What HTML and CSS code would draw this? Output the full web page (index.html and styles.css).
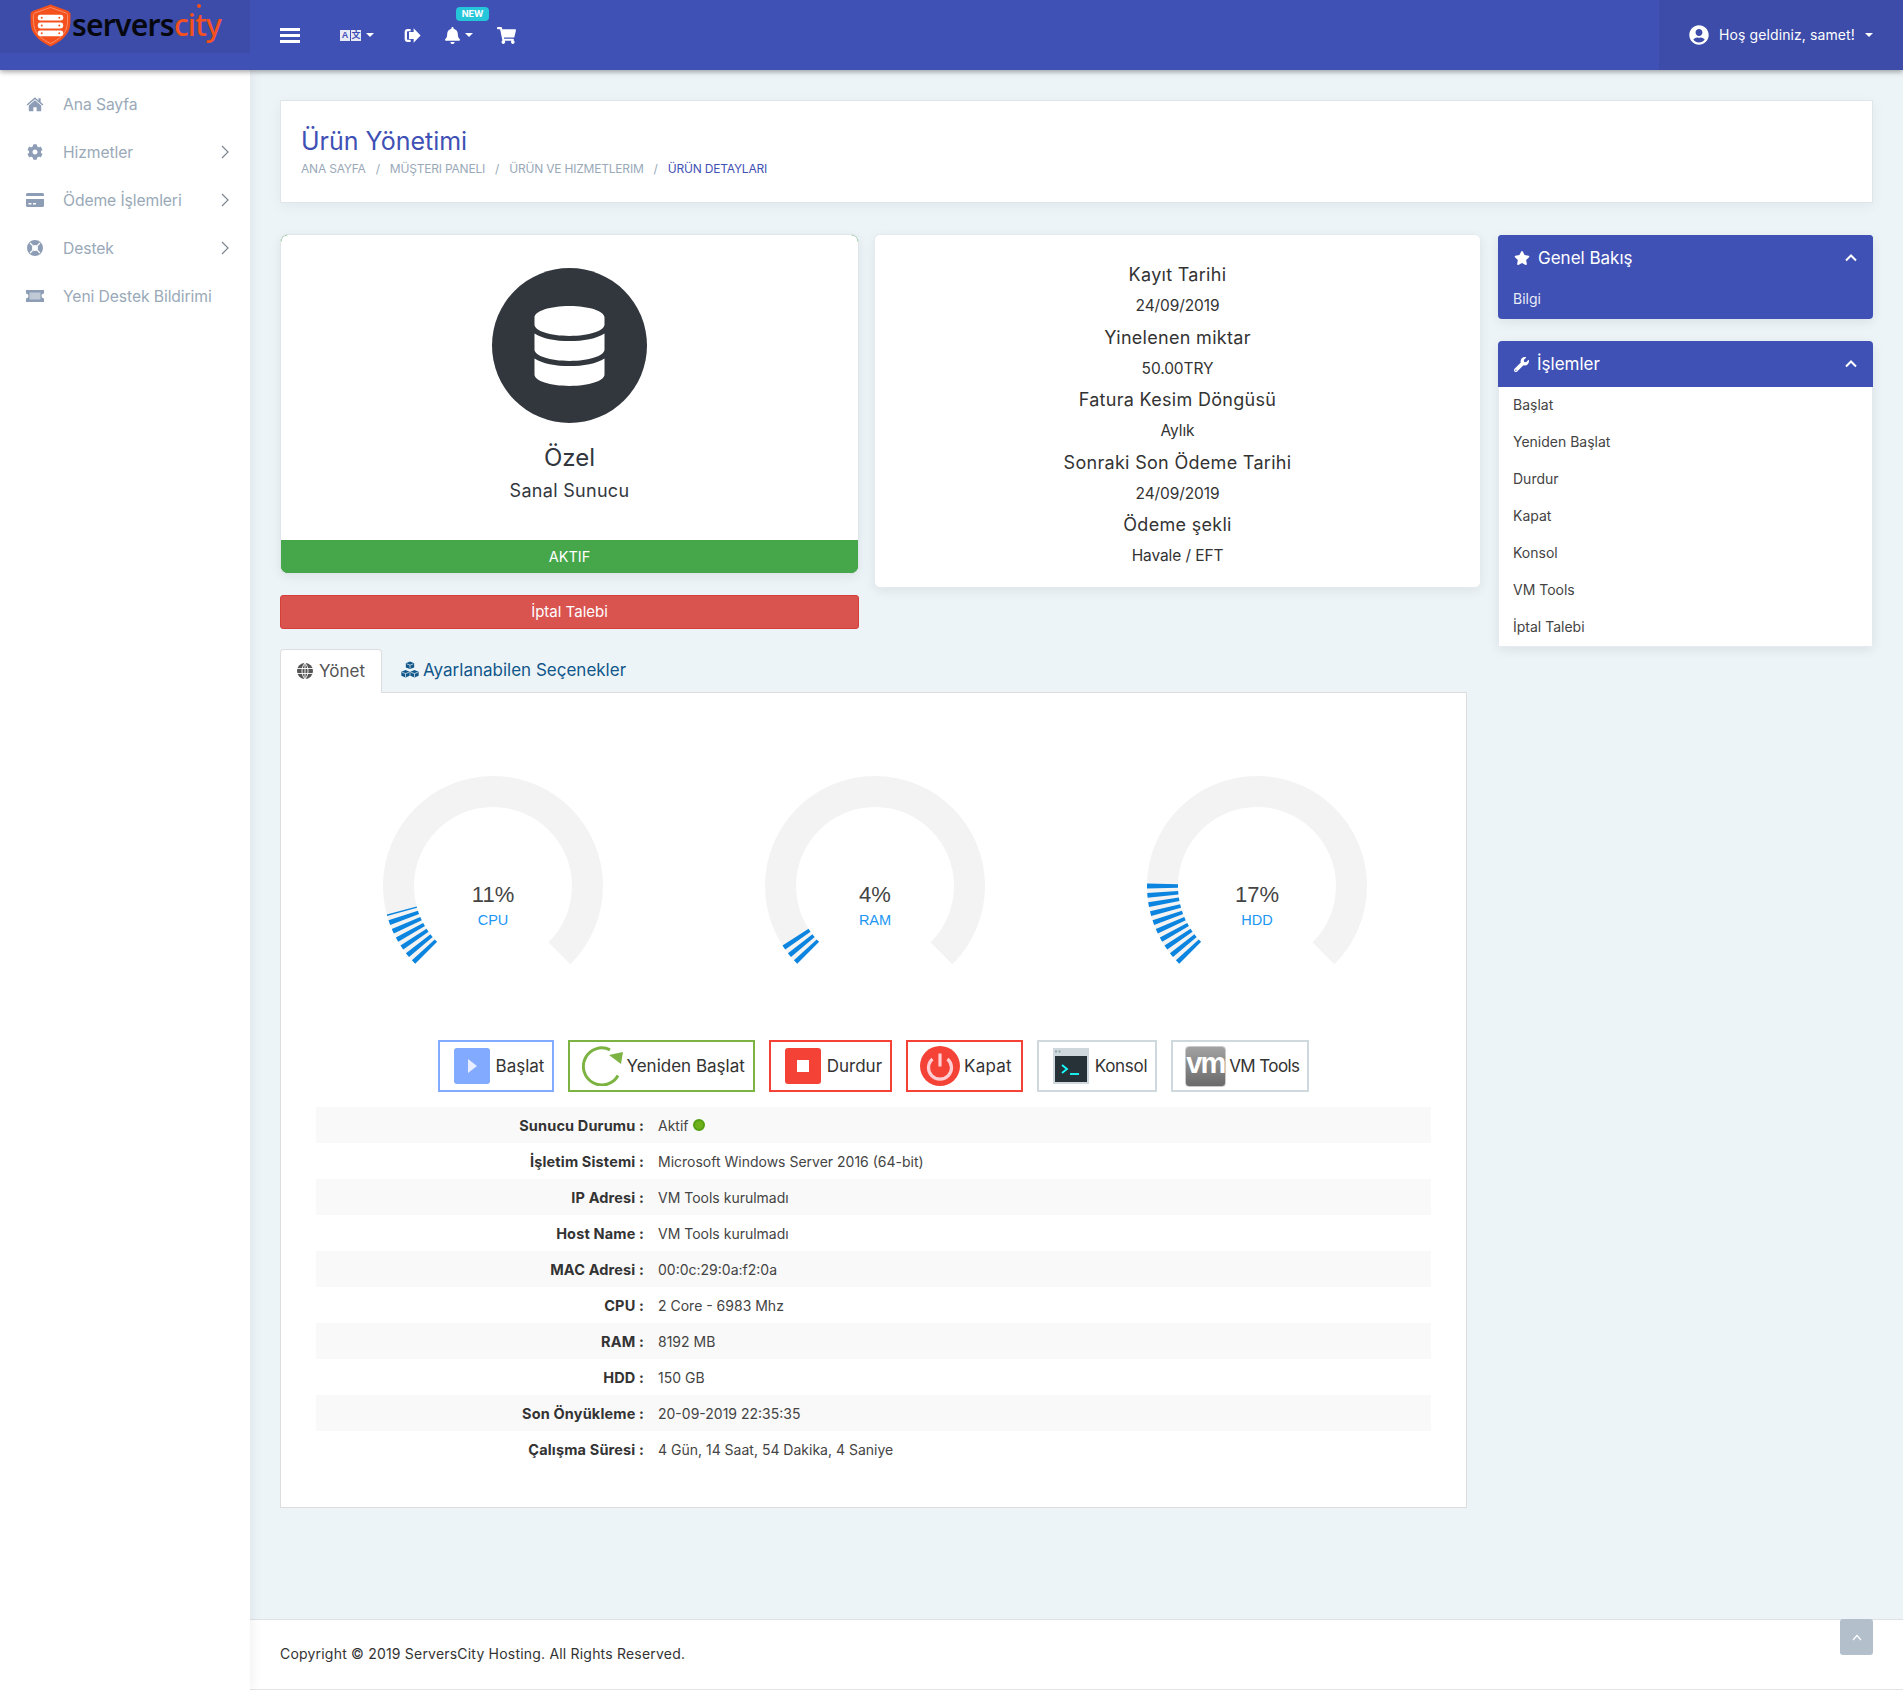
FILE: index.html
```html
<!DOCTYPE html>
<html lang="tr">
<head>
<meta charset="utf-8">
<title>Ürün Yönetimi</title>
<link rel="stylesheet" href="styles.css">
</head>
<body>
<header class="topbar">
  <div class="brand">
    <svg class="brand-mark" viewBox="0 0 42 44"><path d="M21 .5 38.500 7c2 .8 3 2 3 4 0 5 0 10-1 14-2 7-9.500 14-19.500 18.500C11 39 3.500 32 1.500 25 .5 21 .5 16 .5 11c0-2 1-3.200 3-4z" fill="#f4511e"/><path d="M21 3.500 36.500 9c1.500.6 2 1.500 2 3 0 4.500 0 9-1 12.500C36 30.500 29.500 36.500 21 40.500 12.500 36.500 6 30.500 4.500 24.500c-1-3.500-1-8-1-12.500 0-1.500.5-2.400 2-3z" fill="none" stroke="#ff9e80" stroke-width=".8"/><g fill="#fff"><rect x="8" y="11" width="26" height="6" rx="2.500"/><rect x="8" y="19" width="26" height="6" rx="2.500"/><rect x="8" y="27" width="26" height="6" rx="2.500"/></g><g fill="#f4511e"><circle cx="12" cy="14" r="1"/><circle cx="30" cy="14" r="1"/><circle cx="12" cy="22" r="1"/><circle cx="30" cy="22" r="1"/><circle cx="12" cy="30" r="1"/><circle cx="30" cy="30" r="1"/></g></svg>
    <span class="brand-text">servers<span class="brand-city">city</span></span>
  </div>
  <nav class="top-tools">
    <svg class="ic-bars" viewBox="0 0 20 15"><path d="M0 0h20v3H0zM0 6h20v3H0zM0 12h20v3H0z" fill="#fff"/></svg>
    <span class="tool tool-lang"><span class="lang-box"><span class="lang-a">A</span><span class="lang-b">文</span></span><i class="caret"></i></span>
    <svg class="ic-signout" viewBox="0 0 512 512"><path d="M200 60H110C55 60 20 95 20 150v212c0 55 35 90 90 90h90v-70h-80c-18 0-30-12-30-30V160c0-18 12-30 30-30h80z" fill="#fff"/><path d="M290 40 500 256 290 472V360H150V152h140z" fill="#fff"/></svg>
    <span class="tool tool-bell"><svg class="ic-bell" viewBox="0 0 448 512"><path d="M224 512c35.320 0 63.970-28.650 63.970-64H160.030c0 35.350 28.650 64 63.970 64zm215.390-149.710c-19.320-20.760-55.470-51.990-55.470-154.290 0-77.700-54.480-139.900-127.940-155.160V32c0-17.670-14.320-32-31.980-32s-31.980 14.330-31.980 32v20.840C118.560 68.100 64.080 130.300 64.080 208c0 102.300-36.150 133.530-55.470 154.290-6 6.450-8.660 14.160-8.610 21.710.11 16.400 12.980 32 32.100 32h383.800c19.120 0 32-15.600 32.100-32 .05-7.550-2.610-15.270-8.610-21.710z" fill="#fff"/></svg><i class="caret"></i><span class="new-badge">NEW</span></span>
    <svg class="ic-cart" viewBox="0 0 576 512"><path d="M528.120 301.319l47.273-208C578.806 78.301 567.391 64 551.990 64H159.208l-9.166-44.810C147.758 8.021 137.930 0 126.529 0H24C10.745 0 0 10.745 0 24v16c0 13.255 10.745 24 24 24h69.883l70.248 343.435C147.325 417.100 136 435.222 136 456c0 30.928 25.072 56 56 56s56-25.072 56-56c0-15.674-6.447-29.835-16.824-40h209.647C430.447 426.165 424 440.326 424 456c0 30.928 25.072 56 56 56s56-25.072 56-56c0-22.172-12.888-41.332-31.579-50.405l5.517-24.276c3.413-15.018-8.002-29.319-23.403-29.319H218.117l-6.545-32h293.145c11.206 0 20.920-7.754 23.403-18.681z" fill="#fff"/></svg>
  </nav>
  <div class="user-box">
    <svg class="ic-user" viewBox="0 0 496 512"><path d="M248 8C111 8 0 119 0 256s111 248 248 248 248-111 248-248S385 8 248 8zm0 96c48.600 0 88 39.400 88 88s-39.400 88-88 88-88-39.400-88-88 39.400-88 88-88zm0 344c-58.700 0-111.300-26.600-146.500-68.200 18.800-35.400 55.600-59.800 98.500-59.800 2.400 0 4.800.4 7.100 1.100 13 4.200 26.600 6.900 40.900 6.900 14.300 0 28-2.700 40.900-6.900 2.300-.7 4.700-1.100 7.100-1.100 42.900 0 79.700 24.400 98.500 59.800C359.300 421.400 306.700 448 248 448z" fill="#fff"/></svg>
    <span class="user-name">Hoş geldiniz, samet!</span><i class="caret"></i>
  </div>
</header>

<div class="shell">
  <aside class="sidebar">
    <a class="nav-item"><svg class="nav-ic" viewBox="0 0 576 512"><path d="M288 40 20 270l30 34L288 100l238 204 30-34-88-76V70h-70v70z" fill="#8d9db5"/><path d="M288 135 90 305v165c0 12 8 20 20 20h125V360h106v130h125c12 0 20-8 20-20V305z" fill="#8d9db5"/></svg><span class="nav-label">Ana Sayfa</span></a>
    <a class="nav-item"><svg class="nav-ic" viewBox="0 0 512 512"><path d="M487.400 315.700l-42.600-24.600c4.300-23.200 4.300-47 0-70.200l42.600-24.600c4.900-2.800 7.100-8.600 5.500-14-11.100-35.600-30-67.800-54.700-94.600-3.800-4.100-10-5.100-14.800-2.300L380.800 110c-17.900-15.400-38.500-27.300-60.800-35.100V25.800c0-5.600-3.900-10.500-9.400-11.700-36.700-8.200-74.300-7.800-109.200 0-5.500 1.200-9.400 6.100-9.400 11.700V75c-22.200 7.900-42.800 19.800-60.800 35.100L88.700 85.500c-4.900-2.800-11-1.900-14.800 2.300-24.700 26.700-43.600 58.900-54.700 94.600-1.700 5.400.6 11.200 5.500 14L67.300 221c-4.300 23.200-4.300 47 0 70.200l-42.600 24.600c-4.900 2.800-7.100 8.600-5.500 14 11.100 35.600 30 67.800 54.700 94.600 3.800 4.100 10 5.100 14.800 2.300l42.600-24.600c17.900 15.400 38.500 27.300 60.800 35.100v49.200c0 5.600 3.900 10.500 9.400 11.700 36.700 8.200 74.300 7.800 109.200 0 5.500-1.200 9.400-6.100 9.400-11.700v-49.200c22.200-7.900 42.800-19.800 60.800-35.100l42.600 24.600c4.900 2.800 11 1.900 14.800-2.300 24.700-26.700 43.600-58.900 54.700-94.600 1.500-5.500-.7-11.300-5.600-14.100zM256 336c-44.100 0-80-35.900-80-80s35.900-80 80-80 80 35.900 80 80-35.900 80-80 80z" fill="#8d9db5"/></svg><span class="nav-label">Hizmetler</span><svg class="nav-chev" viewBox="0 0 8 14"><path d="M1 1l6 6-6 6" fill="none" stroke="#7a8793" stroke-width="1.200"/></svg></a>
    <a class="nav-item"><svg class="nav-ic" viewBox="0 0 18 14"><path d="M1.500 0h15A1.500 1.500 0 0 1 18 1.500V3H0V1.500A1.500 1.500 0 0 1 1.500 0zM0 6h18v6.500a1.500 1.500 0 0 1-1.500 1.500h-15A1.500 1.500 0 0 1 0 12.500zm2.500 4v1.500h3V10zm4.500 0v1.500h3V10z" fill="#8d9db5"/></svg><span class="nav-label">Ödeme İşlemleri</span><svg class="nav-chev" viewBox="0 0 8 14"><path d="M1 1l6 6-6 6" fill="none" stroke="#7a8793" stroke-width="1.200"/></svg></a>
    <a class="nav-item"><svg class="nav-ic" viewBox="0 0 16 16"><circle cx="8" cy="8" r="5.500" fill="none" stroke="#8d9db5" stroke-width="5"/><path d="M3 3l3 3M13 3l-3 3M3 13l3-3M13 13l-3-3" stroke="#fff" stroke-width="1.200"/></svg><span class="nav-label">Destek</span><svg class="nav-chev" viewBox="0 0 8 14"><path d="M1 1l6 6-6 6" fill="none" stroke="#7a8793" stroke-width="1.200"/></svg></a>
    <a class="nav-item"><svg class="nav-ic" viewBox="0 0 18 14"><path d="M0 1h18v3.500a2.500 2.500 0 0 0 0 5V13H0V9.500a2.500 2.500 0 0 0 0-5z" fill="#8d9db5"/><rect x="3.500" y="3.500" width="11" height="7" fill="#fff" opacity=".45"/></svg><span class="nav-label">Yeni Destek Bildirimi</span></a>
  </aside>

  <main class="main">
    <div class="content">
      <section class="page-head">
        <h1 class="page-title">Ürün Yönetimi</h1>
        <ol class="crumbs">
          <li>ANA SAYFA</li><li class="crumb-sep">/</li>
          <li>MÜŞTERI PANELI</li><li class="crumb-sep">/</li>
          <li>ÜRÜN VE HIZMETLERIM</li><li class="crumb-sep">/</li>
          <li class="crumb-now">ÜRÜN DETAYLARI</li>
        </ol>
      </section>

      <div class="columns">
        <div class="col-left">
          <div class="summary-row">
            <div class="summary-left">
              <section class="product-card">
                <div class="product-body">
                  <div class="product-disc"><svg class="ic-db" viewBox="0 0 448 512"><path d="M448 73.143v45.714C448 159.143 347.667 192 224 192S0 159.143 0 118.857V73.143C0 32.857 100.333 0 224 0s224 32.857 224 73.143zM448 176v102.857C448 319.143 347.667 352 224 352S0 319.143 0 278.857V176c48.125 33.143 136.208 48.572 224 48.572S399.874 209.143 448 176zm0 160v102.857C448 479.143 347.667 512 224 512S0 479.143 0 438.857V336c48.125 33.143 136.208 48.572 224 48.572S399.874 369.143 448 336z" fill="#fff"/></svg></div>
                  <div class="product-name">Özel</div>
                  <div class="product-type">Sanal Sunucu</div>
                </div>
                <div class="product-status">AKTIF</div>
              </section>
              <a class="cancel-btn">İptal Talebi</a>
            </div>
            <section class="info-card">
              <div class="info-key">Kayıt Tarihi</div><div class="info-val">24/09/2019</div>
              <div class="info-key">Yinelenen miktar</div><div class="info-val">50.00TRY</div>
              <div class="info-key">Fatura Kesim Döngüsü</div><div class="info-val">Aylık</div>
              <div class="info-key">Sonraki Son Ödeme Tarihi</div><div class="info-val">24/09/2019</div>
              <div class="info-key">Ödeme şekli</div><div class="info-val">Havale / EFT</div>
            </section>
          </div>

          <div class="tabs">
            <a class="tab tab-active"><svg class="tab-ic" viewBox="0 0 16 16"><circle cx="8" cy="8" r="8" fill="#555"/><path d="M0 5.500h16M0 10.500h16M8 0v16M8 0C4 4 4 12 8 16M8 0c4 4 4 12 0 16" fill="none" stroke="#fff" stroke-width=".9"/></svg>Yönet</a>
            <a class="tab tab-plain"><svg class="tab-ic-cubes" viewBox="0 0 16 16"><path d="M8 .5l3.700 1.500v3.700L8 7.200 4.300 5.700V2zM4 8l3.700 1.500v3.700L4 14.700.3 13.200V9.500zM12 8l3.700 1.500v3.700L12 14.700l-3.700-1.500V9.500z" fill="#11578a"/><path d="M5 2.500l3 1.200 3-1.200M8 3.700v3M1 10l3 1.200L7 10M4 11.200v3M9 10l3 1.200 3-1.200M12 11.200v3" fill="none" stroke="#fff" stroke-width=".6"/></svg>Ayarlanabilen Seçenekler</a>
          </div>

          <section class="panel">
            <div class="gauges">
              <div class="gauge">
                <svg class="gauge-svg" viewBox="0 0 240 240"><circle class="g-track" cx="120" cy="120" r="94.500"/><circle class="g-fill g-cpu" cx="120" cy="120" r="94.500"/></svg>
                <div class="gauge-text"><div class="gauge-num">11%</div><div class="gauge-name">CPU</div></div>
              </div>
              <div class="gauge">
                <svg class="gauge-svg" viewBox="0 0 240 240"><circle class="g-track" cx="120" cy="120" r="94.500"/><circle class="g-fill g-ram" cx="120" cy="120" r="94.500"/></svg>
                <div class="gauge-text"><div class="gauge-num">4%</div><div class="gauge-name">RAM</div></div>
              </div>
              <div class="gauge">
                <svg class="gauge-svg" viewBox="0 0 240 240"><circle class="g-track" cx="120" cy="120" r="94.500"/><circle class="g-fill g-hdd" cx="120" cy="120" r="94.500"/></svg>
                <div class="gauge-text"><div class="gauge-num">17%</div><div class="gauge-name">HDD</div></div>
              </div>
            </div>

            <div class="actions">
              <a class="act act-blue"><span class="act-ic"><svg viewBox="0 0 36 36" width="36" height="36"><rect width="36" height="36" rx="3" fill="#82aaff"/><path d="M14 11l9 7-9 7z" fill="#e8eeff"/></svg></span>Başlat</a>
              <a class="act act-green"><span class="act-ic"><svg viewBox="0 0 41 40" width="41" height="40"><path d="M28 3.800A18.500 18.500 0 1 0 36 29.500" fill="none" stroke="#7cb342" stroke-width="3"/><path d="M27 9 41 6 39 18z" fill="#7cb342"/></svg></span>Yeniden Başlat</a>
              <a class="act act-red"><span class="act-ic"><svg viewBox="0 0 36 36" width="36" height="36"><rect width="36" height="36" rx="3" fill="#f44336"/><rect x="12" y="12" width="12" height="12" fill="#fff"/></svg></span>Durdur</a>
              <a class="act act-red act-kapat"><span class="act-ic"><svg viewBox="0 0 40 40" width="40" height="40"><circle cx="20" cy="20" r="20" fill="#f44336"/><path d="M12.500 13a11.500 11.500 0 1 0 15 0" fill="none" stroke="#ffcdd2" stroke-width="3.200"/><path d="M20 7.500v13" stroke="#ffcdd2" stroke-width="3.200"/></svg></span>Kapat</a>
              <a class="act act-grey"><span class="act-ic"><svg viewBox="0 0 36 36" width="36" height="36"><rect width="36" height="36" fill="#cfd8dc"/><rect x="2" y="8" width="32" height="26" fill="#263238"/><rect x="2" y="2.500" width="2" height="2" fill="#90a4ae"/><rect x="5.500" y="2.500" width="2" height="2" fill="#90a4ae"/><path d="M9 17l5 4-5 4" fill="none" stroke="#18ffff" stroke-width="1.800"/><path d="M17 26h9" stroke="#18ffff" stroke-width="1.800"/></svg></span>Konsol</a>
              <a class="act act-grey act-vm"><span class="act-ic"><span class="vm-mark">vm</span></span>VM Tools</a>
            </div>

            <dl class="specs">
              <div class="spec"><dt>Sunucu Durumu :</dt><dd>Aktif <i class="dot"></i></dd></div>
              <div class="spec"><dt>İşletim Sistemi :</dt><dd>Microsoft Windows Server 2016 (64-bit)</dd></div>
              <div class="spec"><dt>IP Adresi :</dt><dd>VM Tools kurulmadı</dd></div>
              <div class="spec"><dt>Host Name :</dt><dd>VM Tools kurulmadı</dd></div>
              <div class="spec"><dt>MAC Adresi :</dt><dd>00:0c:29:0a:f2:0a</dd></div>
              <div class="spec"><dt>CPU :</dt><dd>2 Core - 6983 Mhz</dd></div>
              <div class="spec"><dt>RAM :</dt><dd>8192 MB</dd></div>
              <div class="spec"><dt>HDD :</dt><dd>150 GB</dd></div>
              <div class="spec"><dt>Son Önyükleme :</dt><dd>20-09-2019 22:35:35</dd></div>
              <div class="spec"><dt>Çalışma Süresi :</dt><dd>4 Gün, 14 Saat, 54 Dakika, 4 Saniye</dd></div>
            </dl>
          </section>
        </div>

        <aside class="col-right">
          <section class="side-card side-card-blue">
            <div class="side-head"><svg class="side-ic" viewBox="0 0 576 512"><path d="M259.300 17.800L194 150.200 47.900 171.500c-26.200 3.800-36.700 36.100-17.700 54.600l105.700 103-25 145.500c-4.500 26.300 23.200 46 46.400 33.700L288 439.600l130.700 68.700c23.200 12.200 50.900-7.400 46.400-33.700l-25-145.500 105.700-103c19-18.500 8.500-50.800-17.700-54.600L382 150.200 316.700 17.800c-11.700-23.600-45.600-23.900-57.400 0z" fill="#fff"/></svg><span class="side-title">Genel Bakış</span><svg class="side-chev" viewBox="0 0 12 8"><path d="M1 6.500l5-5 5 5" fill="none" stroke="#fff" stroke-width="2"/></svg></div>
            <div class="side-note">Bilgi</div>
          </section>
          <section class="side-card">
            <div class="side-head"><svg class="side-ic-w" viewBox="0 0 512 512"><path d="M507.730 109.100c-2.240-9.030-13.540-12.090-20.120-5.510l-74.360 74.360-67.880-11.310-11.310-67.880 74.360-74.360c6.620-6.620 3.430-17.900-5.660-20.160-47.380-11.740-99.550.91-136.580 37.930-39.640 39.640-50.550 97.100-34.050 147.200L18.740 402.760c-24.990 24.990-24.990 65.510 0 90.500 24.990 24.990 65.510 24.990 90.500 0l213.210-213.210c50.120 16.710 107.470 5.680 147.370-34.220 37.070-37.070 49.700-89.320 37.910-136.730zM64 472c-13.250 0-24-10.750-24-24 0-13.260 10.750-24 24-24s24 10.740 24 24c0 13.250-10.750 24-24 24z" fill="#fff"/></svg><span class="side-title">İşlemler</span><svg class="side-chev" viewBox="0 0 12 8"><path d="M1 6.500l5-5 5 5" fill="none" stroke="#fff" stroke-width="2"/></svg></div>
            <ul class="side-list">
              <li>Başlat</li><li>Yeniden Başlat</li><li>Durdur</li><li>Kapat</li><li>Konsol</li><li>VM Tools</li><li>İptal Talebi</li>
            </ul>
          </section>
        </aside>
      </div>
    </div>

    <footer class="footer">
      <span class="footer-text">Copyright © 2019 ServersCity Hosting. All Rights Reserved.</span>
      <a class="to-top"><svg viewBox="0 0 10 7" width="10" height="7"><path d="M1 6l4-4.500L9 6" fill="none" stroke="#fff" stroke-width="1.200"/></svg></a>
    </footer>
  </main>
</div>
</body>
</html>
```

FILE: styles.css
```css
* { box-sizing: border-box; }
html, body { margin: 0; padding: 0; }
body {
  width: 1903px;
  height: 1690px;
  background: #edf4f8;
  color: #333;
  font-family: Inter, "Open Sans", sans-serif;
  font-size: 14px;
  letter-spacing: 0;
  overflow: hidden;
}
a { color: inherit; text-decoration: none; }
svg { display: block; flex: none; }
h1, ol, ul, dl, dd, dt { margin: 0; padding: 0; list-style: none; }

/* top bar */
.topbar {
  position: relative;
  z-index: 3;
  height: 70px;
  display: flex;
  background: #3f51b5;
  box-shadow: 0 2px 5px rgba(0, 0, 0, .35);
}
.brand {
  width: 250px;
  height: 53px;
  flex: none;
  display: flex;
  padding: 4px 0 0 30px;
  background: #3c4ca8;
}
.brand-mark { width: 41px; height: 43px; }
.brand-text {
  margin-left: 1px;
  font-family: "Noto Sans", sans-serif;
  font-size: 30px;
  font-weight: 600;
  line-height: 42px;
  letter-spacing: -0.75px;
  color: #07080f;
}
.brand-city { position: relative; color: #f4511e; font-weight: 500; }
.brand-city::after {
  content: "";
  position: absolute;
  left: 23px;
  top: 0;
  width: 4px;
  height: 4px;
  border-radius: 50%;
  background: #f4511e;
}
.top-tools {
  flex: 1;
  display: flex;
  align-items: center;
  padding: 0 0 0 30px;
  height: 70px;
}
.caret {
  display: block;
  flex: none;
  width: 0;
  height: 0;
  border-left: 4px solid transparent;
  border-right: 4px solid transparent;
  border-top: 4px solid #fff;
}
.tool { display: flex; align-items: center; gap: 5px; position: relative; }
.ic-bars { width: 20px; height: 15px; }
.tool-lang { margin-left: 40px; }
.lang-box { display: flex; width: 21px; height: 11px; gap: 1px; }
.lang-a, .lang-b {
  width: 10px;
  height: 11px;
  background: #e8ebf7;
  color: #3f51b5;
  font: 700 9px/11px "Liberation Sans", "Noto Sans CJK SC", sans-serif;
  text-align: center;
}
.ic-signout { width: 17px; height: 17px; margin-left: 30px; }
.tool-bell { margin-left: 24px; }
.ic-bell { width: 15px; height: 17px; }
.new-badge {
  position: absolute;
  left: 11px;
  top: -20px;
  width: 33px;
  height: 14px;
  border-radius: 4px;
  background: #26c6da;
  color: #fff;
  font-size: 9px;
  font-weight: 700;
  line-height: 14px;
  text-align: center;
}
.ic-cart { width: 19px; height: 17px; margin-left: 24px; }
.user-box {
  width: 244px;
  flex: none;
  display: flex;
  align-items: center;
  padding-left: 30px;
  background: #3c4ca8;
  color: #fff;
}
.ic-user { width: 20px; height: 20px; }
.user-name { margin-left: 10px; width: 146px; letter-spacing: .1px; white-space: nowrap; position: relative; top: -1px; }

/* shell */
.shell { display: flex; height: 1620px; }
.sidebar {
  width: 250px;
  flex: none;
  background: #fff;
  padding-top: 10px;
  box-shadow: 1px 0 12px rgba(0, 0, 0, .07);
  position: relative;
  z-index: 2;
}
.nav-item {
  height: 48px;
  display: flex;
  align-items: center;
  padding-left: 26px;
  color: #99a9b8;
  font-size: 15.7px;
  letter-spacing: -.1px;
}
.nav-ic { width: 18px; height: 16px; }
.nav-label { margin-left: 19px; flex: 1; white-space: nowrap; }
.nav-chev { width: 8px; height: 14px; margin-right: 21px; }

.main { flex: 1; min-width: 0; display: flex; flex-direction: column; }
.content { flex: 1; padding: 30px 30px 0; }
.page-head {
  height: 103px;
  padding: 21px 20px 0;
  background: #fff;
  border: 1px solid #dfe6ea;
  box-shadow: 0 3px 12px rgba(0, 0, 0, .05);
}
.page-title { font-size: 25px; font-weight: 400; line-height: 38px; color: #3f51b5; }
.crumbs { display: flex; font-size: 12px; letter-spacing: -.2px; line-height: 18px; color: #99a9b8; white-space: nowrap; }
.crumb-sep { margin: 0 10px; }
.crumb-now { color: #3f51b5; }

.columns { display: flex; gap: 17px; margin-top: 31px; align-items: flex-start; }
.col-left { width: 1201px; flex: none; }
.col-right { flex: 1; min-width: 0; padding-top: 1px; }

.summary-row { display: flex; gap: 16px; align-items: flex-start; }
.summary-left { width: 579px; flex: none; }
.product-card {
  height: 340px;
  background: #46a64a;
  border: 1px solid #dfe6ea;
  border-radius: 8px;
  overflow: hidden;
  display: flex;
  flex-direction: column;
  box-shadow: 0 3px 12px rgba(0, 0, 0, .07);
}
.product-body {
  flex: 1;
  display: flex;
  flex-direction: column;
  align-items: center;
  padding-top: 33px;
  background: #fff;
  border-radius: 7px 7px 0 0;
}
.product-disc {
  width: 155px;
  height: 155px;
  border-radius: 50%;
  background: #32373e;
  display: flex;
  align-items: center;
  justify-content: center;
}
.ic-db { width: 71px; height: 80px; }
.product-name { margin-top: 17px; font-size: 24px; line-height: 36px; color: #32373e; }
.product-type { margin-top: 1px; font-size: 18px; letter-spacing: .3px; line-height: 28px; color: #32373e; }
.product-status { height: 33px; background: #46a64a; color: #fff; font-size: 14.5px; line-height: 33px; text-align: center; }
.cancel-btn {
  display: block;
  height: 34px;
  margin-top: 21px;
  background: #d9534f;
  border: 1px solid #d43f3a;
  border-radius: 3px;
  color: #fff;
  font-size: 15px;
  line-height: 32px;
  text-align: center;
}
.info-card {
  flex: 1;
  height: 354px;
  margin-left: -1px;
  padding: 24px 0 0;
  background: #fff;
  border: 1px solid #e4eaee;
  border-radius: 6px;
  text-align: center;
  box-shadow: 0 3px 12px rgba(0, 0, 0, .07);
  color: #333;
}
.info-key { font-size: 18px; letter-spacing: .3px; line-height: 31px; }
.info-val { font-size: 15.5px; letter-spacing: -.1px; line-height: 31.500px; }

/* tabs */
.tabs { display: flex; margin-top: 20px; width: 1187px; height: 44px; border-bottom: 1px solid #dddddd; }
.tab {
  display: flex;
  align-items: center;
  gap: 5px;
  height: 44px;
  padding: 0 16px 2px;
  font-size: 17px;
  color: #11578a;
  white-space: nowrap;
}
.tab-plain { padding-left: 19px; gap: 4px; }
.tab-ic { width: 16px; height: 16px; }
.tab-ic-cubes { width: 18px; height: 18px; }
.tab-active {
  width: 102px;
  gap: 6px;
  padding-right: 0;
  background: #fff;
  border: 1px solid #dddddd;
  border-bottom: 0;
  border-radius: 4px 4px 0 0;
  color: #555;
}

/* panel */
.panel {
  width: 1187px;
  height: 815px;
  padding: 73px 35px 0;
  background: #fff;
  border: 1px solid #dddddd;
  border-top: 0;
}
.gauges { display: flex; justify-content: center; gap: 142px; padding-left: 3px; }
.gauge { position: relative; width: 240px; height: 240px; }
.gauge-svg { width: 240px; height: 240px; }
.g-track, .g-fill { fill: none; stroke-width: 31; transform: rotate(135deg); transform-origin: 120px 120px; }
.g-track { stroke: #f3f3f3; stroke-dasharray: 445.300 600; }
.g-fill { stroke: #0b85df; }
.g-cpu { stroke-dasharray: 4.200 3.800 4.200 3.800 4.200 3.800 4.200 3.800 4.200 3.800 4.200 3.800 1.400 600; }
.g-ram { stroke-dasharray: 4.200 3.800 4.200 3.800 4.200 600; }
.g-hdd { stroke-dasharray: 4.200 3.800 4.200 3.800 4.200 3.800 4.200 3.800 4.200 3.800 4.200 3.800 4.200 3.800 4.200 3.800 4.200 3.800 4.200 600; }
.gauge-text { position: absolute; left: 0; right: 0; top: 113px; text-align: center; font-family: "Liberation Sans", sans-serif; }
.gauge-num { font-size: 22px; line-height: 31px; color: #444; }
.gauge-name { font-size: 14.500px; line-height: 20px; color: #2196f3; }

.actions { display: flex; justify-content: center; gap: 14px; margin-top: 34px; }
.act {
  display: flex;
  align-items: center;
  gap: 2px;
  height: 52px;
  padding: 0 8px 0 10px;
  border: 2px solid #cfd8dc;
  font-size: 17px;
  color: #333;
  white-space: nowrap;
}
.act-ic { width: 44px; display: flex; justify-content: center; flex: none; }
.act-blue { border-color: #82aaff; }
.act-green { border-color: #7cb342; }
.act-red { border-color: #f44336; }
.act-kapat { padding-right: 9px; letter-spacing: .2px; }
.act-grey { letter-spacing: -.3px; }
.act-vm { letter-spacing: -.6px; }
.vm-mark {
  width: 41px;
  height: 41px;
  border-radius: 4px;
  border: 1px solid #c9c9c9;
  background: linear-gradient(#a2a2a2, #6a6a6a);
  color: #fff;
  font: 700 29px/33px "Liberation Sans", sans-serif;
  letter-spacing: -2px;
  text-align: center;
}

.specs { margin-top: 15px; }
.spec { display: flex; height: 36px; align-items: center; font-size: 14px; }
.spec:nth-child(odd) { background: #f9f9f9; }
.spec dt { width: 328px; text-align: right; font-size: 14.5px; font-weight: 700; letter-spacing: .15px; white-space: nowrap; }
.spec dd { margin-left: 14px; white-space: nowrap; display: flex; align-items: center; gap: 4px; color: #444; }
.dot { display: block; width: 12px; height: 12px; border-radius: 50%; background: #6fb01a; border: 2px solid #52a00f; }

/* right column */
.side-card {
  background: #fff;
  border-radius: 4px;
  overflow: hidden;
  margin-bottom: 22px;
  box-shadow: 0 3px 12px rgba(0, 0, 0, .08);
}
.side-card-blue { background: #3f51b5; height: 84px; }
.side-head {
  display: flex;
  align-items: center;
  height: 46px;
  padding: 0 16px;
  background: #3f51b5;
  color: #fff;
}
.side-ic { width: 16px; height: 14px; }
.side-ic-w { width: 15px; height: 15px; }
.side-title { flex: 1; margin-left: 8px; font-size: 17px; }
.side-chev { width: 12px; height: 8px; }
.side-note { padding: 0 15px; color: #e8ebf7; font-size: 14px; line-height: 36px; }
.side-list { height: 260px; border: 1px solid #e4eaee; border-top: 0; }
.side-list li { height: 37px; padding-left: 14px; line-height: 35px; font-size: 14px; color: #444; }

/* footer */
.footer {
  position: relative;
  height: 71px;
  flex: none;
  display: flex;
  align-items: center;
  padding: 0 30px;
  background: #fff;
  border-top: 1px solid #dfe2e4;
  border-bottom: 1px solid #e4e4e4;
  font-size: 14px;
  letter-spacing: .2px;
  color: #333;
}
.footer-text { position: relative; top: -1px; }
.to-top {
  position: absolute;
  right: 30px;
  top: -1px;
  width: 33px;
  height: 36px;
  border-radius: 3px;
  background: #b3c0cc;
  display: flex;
  align-items: center;
  justify-content: center;
}
```
